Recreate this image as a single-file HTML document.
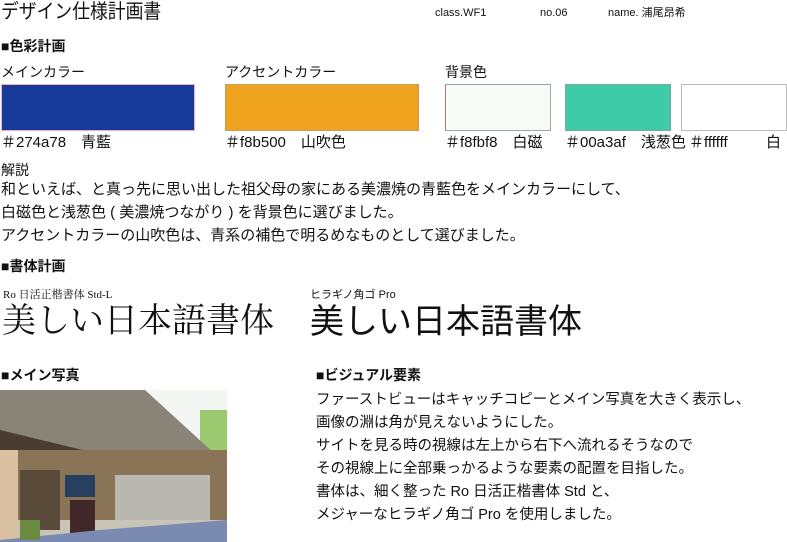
<!DOCTYPE html>
<html><head><meta charset="utf-8"><style>
body{margin:0;width:787px;height:542px;background:#fff;position:relative;overflow:hidden;font-family:"Liberation Sans","Noto Sans CJK JP",sans-serif;color:#111}
.a{position:absolute;white-space:nowrap;line-height:1}
.h{font-weight:bold;font-size:14px}
.t{font-size:14px}
.b{font-size:15px}
.sw{position:absolute;top:84px;height:47px;box-sizing:border-box}
</style></head><body>
<div class="a" style="left:1px;top:2px;font-size:20px;transform:scaleX(0.89);transform-origin:0 0">デザイン仕様計画書</div>
<div class="a" style="left:435px;top:8px;font-size:11px">class.WF1</div>
<div class="a" style="left:540px;top:8px;font-size:11px">no.06</div>
<div class="a" style="left:608px;top:8px;font-size:11px">name. 浦尾昂希</div>
<div class="a h" style="left:1px;top:39px">■色彩計画</div>
<div class="a t" style="left:1px;top:65px">メインカラー</div>
<div class="a t" style="left:225px;top:65px">アクセントカラー</div>
<div class="a t" style="left:445px;top:65px">背景色</div>
<div class="sw" style="left:1px;width:194px;background:#16399a;border:1px solid #e8b0c0"></div>
<div class="sw" style="left:225px;width:194px;background:#f0a31e;border:1px solid #c89a60"></div>
<div class="sw" style="left:445px;width:106px;background:#f6fbf5;border:1px solid #9aa;border-left-color:#d66"></div>
<div class="sw" style="left:565px;width:106px;background:#3ecca8;border:1px solid #7a9"></div>
<div class="sw" style="left:681px;width:106px;background:#fff;border:1px solid #bbb"></div>
<div class="a b" style="left:1px;top:135px">＃274a78　青藍</div>
<div class="a b" style="left:225px;top:135px">＃f8b500　山吹色</div>
<div class="a b" style="left:445px;top:135px">＃f8fbf8　白磁</div>
<div class="a b" style="left:565px;top:135px">＃00a3af　浅葱色</div>
<div class="a b" style="left:689px;top:135px">＃ffffff</div>
<div class="a b" style="left:766px;top:135px">白</div>
<div class="a t" style="left:1px;top:163px">解説</div>
<div class="a b" style="left:1px;top:182px">和といえば、と真っ先に思い出した祖父母の家にある美濃焼の青藍色をメインカラーにして、</div>
<div class="a b" style="left:1px;top:205px">白磁色と浅葱色 ( 美濃焼つながり ) を背景色に選びました。</div>
<div class="a b" style="left:1px;top:228px">アクセントカラーの山吹色は、青系の補色で明るめなものとして選びました。</div>
<div class="a h" style="left:1px;top:259px">■書体計画</div>
<div class="a" style="left:3px;top:290px;font-size:11px;font-family:'Liberation Serif','Noto Serif CJK SC',serif">Ro 日活正楷書体 Std-L</div>
<div class="a" style="left:310px;top:290px;font-size:11px">ヒラギノ角ゴ Pro</div>
<div class="a" style="left:2px;top:305px;font-size:34px;font-family:'Liberation Serif','Noto Serif CJK SC',serif">美しい日本語書体</div>
<div class="a" style="left:310px;top:305px;font-size:34px">美しい日本語書体</div>
<div class="a h" style="left:1px;top:368px">■メイン写真</div>
<div class="a h" style="left:316px;top:368px">■ビジュアル要素</div>
<div class="a" style="left:316px;top:389px;font-size:14.5px;line-height:23px;white-space:normal;width:470px">ファーストビューはキャッチコピーとメイン写真を大きく表示し、<br>画像の淵は角が見えないようにした。<br>サイトを見る時の視線は左上から右下へ流れるそうなので<br>その視線上に全部乗っかるような要素の配置を目指した。<br>書体は、細く整った Ro 日活正楷書体 Std と、<br>メジャーなヒラギノ角ゴ Pro を使用しました。</div>
<svg style="position:absolute;left:0;top:390px" width="227" height="152">
<rect width="227" height="152" fill="#c8c4b8"/>
<rect x="140" y="0" width="87" height="60" fill="#f4f6f4"/>
<rect x="200" y="20" width="27" height="70" fill="#9cc870"/>
<polygon points="0,0 145,0 227,75 227,100 0,70" fill="#8a8478"/>
<polygon points="0,40 227,95 227,103 0,65" fill="#4a3c30"/>
<rect x="0" y="60" width="227" height="70" fill="#8a7458"/>
<rect x="20" y="80" width="40" height="60" fill="#5a4a3a"/>
<rect x="65" y="85" width="30" height="22" fill="#284060"/>
<rect x="115" y="85" width="95" height="45" fill="#b8b8b0"/>
<rect x="70" y="110" width="25" height="35" fill="#402828"/>
<rect x="0" y="60" width="18" height="92" fill="#d8c0a0"/>
<polygon points="0,152 227,152 227,130 100,140 0,150" fill="#7a8ab0"/>
<rect x="20" y="130" width="20" height="20" fill="#6a8a40"/>
</svg>
</body></html>
